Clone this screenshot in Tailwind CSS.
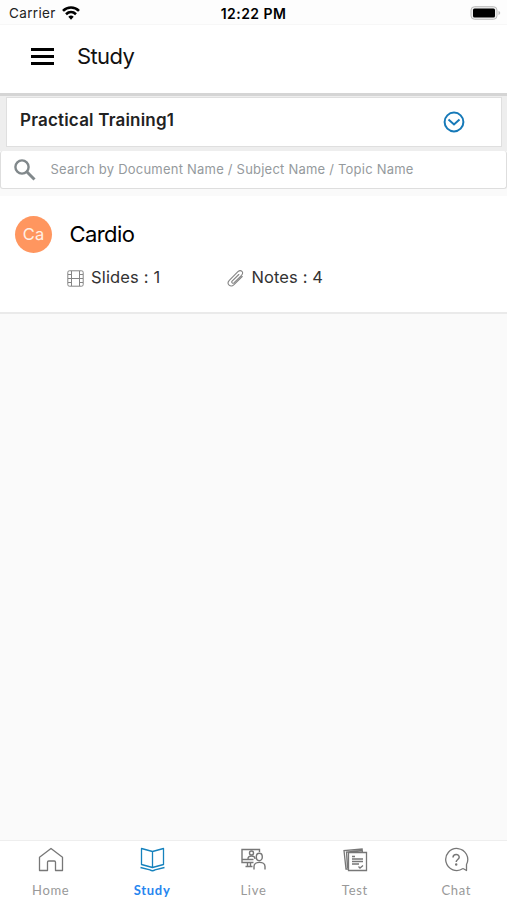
<!DOCTYPE html>
<html lang="en"><head><meta charset="utf-8"><title>Study</title>
<script src="https://cdn.jsdelivr.net/npm/@tailwindcss/browser@4"></script></head>
<body class="bg-[#fafafa]">
<div class="flex h-[900px] w-[507px] flex-col overflow-hidden font-['Inter','Liberation_Sans',sans-serif] text-black">
  <div class="grid h-[25px] shrink-0 grid-cols-3 items-center border-b border-[#f7f7f7] bg-[#fdfdfd] pt-[3px] text-[13.5px]">
    <div class="flex items-center gap-[6px] pl-[9px] text-[#222]"><span class="whitespace-nowrap text-[13.5px] tracking-[0.35px]">Carrier</span>
      <svg class="mb-[2px] h-[14px] w-[18px]" viewBox="0 0 18 14" fill="none" stroke="#000" stroke-width="2.6"><path d="M1 4.9C5.5.4 12.500.4 17 4.900M4 8.200C7 5.400 11 5.400 14 8.200"/><path d="M6.300 10.800Q9 8.400 11.700 10.800L9 13.700Z" fill="#000" stroke="none"/></svg>
    </div>
    <div class="text-center text-[14px] font-semibold tracking-[0.45px] whitespace-nowrap">12:22 PM</div>
    <div class="flex justify-end pr-[6px]"><svg class="mb-[2px] h-[14px] w-[31px]" viewBox="0 0 31 14"><rect x="1" y=".7" width="26" height="12.600" rx="3.500" fill="#eee" stroke="#bbb"/><rect x="3" y="2.500" width="22" height="9" rx="1.500"/><path d="M28.500 4.800Q32 7 28.500 9.200Z" fill="#bbb"/></svg></div>
  </div>
  <header class="flex h-[68px] shrink-0 items-center bg-white pb-[5px] pl-[31px]">
    <svg class="h-[19px] w-[23px]" viewBox="0 0 23 19"><path d="M0 1h23v3H0zM0 8h23v3H0zM0 15h23v3H0z"/></svg>
    <h1 class="ml-[23px] text-[22px] tracking-[-0.6px] text-[#111]">Study</h1>
  </header>
  <section class="h-[58px] shrink-0 border-t-[3px] border-[#d5d5d5] bg-[#eeeeee] pr-[5px] pl-[6px]">
    <div class="mt-px flex h-[50px] items-center justify-between border border-[#dfdfdf] bg-white pr-[36px] pl-[13px]">
      <span class="mb-[3px] text-[17px] font-semibold tracking-[0.2px] text-[#222]">Practical Training1</span>
      <svg class="h-[22px] w-[22px]" viewBox="0 0 22 22" fill="none" stroke="#1679b8" stroke-width="2"><circle cx="11" cy="11" r="9.400"/><path d="m5.500 8.500 5.500 5L16.500 8.500"/></svg>
    </div>
  </section>
  <div class="flex h-[38px] shrink-0 items-center rounded-[3px] border-x border-b border-[#dedede] bg-white pl-[13px]">
    <svg class="h-[22px] w-[22px]" viewBox="0 0 22 22" fill="none" stroke="#81888b"><circle cx="8" cy="8" r="6.600" stroke-width="2.400"/><path d="m12.800 12.800 7.700 7.700" stroke-width="3"/></svg>
    <span class="ml-[14.5px] text-[13px] tracking-[0.22px] whitespace-nowrap text-[#959a9d]">Search by Document Name / Subject Name / Topic Name</span>
  </div>
  <article class="mt-[7px] h-[118px] shrink-0 border-b-2 border-[#eaeaea] bg-white pt-[20px] pl-[15px]">
    <div class="flex items-center"><div class="flex h-[37px] w-[37px] items-center justify-center rounded-full bg-[#ff965f] text-[16.500px] text-[#fff0e5]">Ca</div><h2 class="ml-[17.5px] text-[22px] tracking-[-0.6px]">Cardio</h2></div>
    <div class="mt-[12px] ml-[52px] flex items-center text-[16.500px] text-[#333]">
      <div class="flex w-[160px] items-center gap-[7px]"><svg class="mt-[2px] h-[17px] w-[17px]" viewBox="0 0 17 17" fill="none" stroke="#858585"><rect x=".8" y=".8" width="15.400" height="15.400" rx="1.500"/><path d="M4.500 1v15M12.500 1v15M4.500 8.500h8M1 4.500h3.500M1 8.500h3.500M1 12.500h3.500M12.500 4.500H16M12.500 8.500H16M12.500 12.500H16"/></svg><span class="tracking-[0.15px] whitespace-nowrap">Slides : 1</span></div>
      <div class="flex items-center gap-[7.5px]"><svg class="mt-[2px] h-[17px] w-[17px]" viewBox="0 0 17 17" fill="none" stroke="#858585" stroke-width="1.100" stroke-linecap="round"><path d="m11.800 4.500-6.700 6.700c-1 1.200.6 2.700 1.800 1.600L14.500 5.300C17.500 2.200 14 -1 10.900 1.700L2.300 10.300c-3.300 3.600 1.200 7.700 4.700 4.400l8.200-8.200"/></svg><span class="tracking-[0.1px] whitespace-nowrap">Notes : 4</span></div>
    </div>
  </article>
  <main class="flex-1 bg-[#fafafa]"></main>
  <nav class="grid h-[60px] shrink-0 grid-cols-5 border-t border-[#eeeeee] bg-white font-['Lato','Open_Sans',sans-serif] text-[13px] leading-[16px] tracking-[0.7px] text-[#999]">
    <div class="flex flex-col items-center gap-[9px] pt-[6px]"><svg class="h-[26px] w-[26px]" viewBox="0 0 26 26" fill="none" stroke="#777" stroke-width="1.300" stroke-linejoin="round"><path d="M1.500 10.300 13 1.500l11.500 8.800v13.200h-7v-8.300q0-1.200-1.200-1.200H10.700q-1.200 0-1.200 1.200v8.300h-8z"/></svg><span>Home</span></div>
    <div class="flex flex-col items-center gap-[9px] pt-[6px] font-bold text-[#2686ef]"><svg class="h-[26px] w-[26px]" viewBox="0 0 26 26" fill="none" stroke="#1682bd" stroke-width="1.300" stroke-linejoin="round"><path d="M2.500 1.500 13.500 4.500l11-3v16l-11 3-11-3zM13.500 4.500v16M1.500 20.500l9.500 2.400q2.500 1.700 5 0L25.500 20.500"/></svg><span>Study</span></div>
    <div class="flex flex-col items-center gap-[9px] pt-[6px]"><svg class="h-[26px] w-[26px]" viewBox="0 0 26 26" fill="none" stroke="#777" stroke-width="1.400"><path d="M19.500 5V2.500H2v13h11.500M2 12.500h11.500M7.500 15.500v3.500M10.500 15.500v3.500M5.500 19.500h7"/><circle cx="11.500" cy="6" r="2"/><path d="M8 12c0-4 7-4 7 0"/><ellipse cx="19.300" cy="10" rx="3" ry="3.700"/><path d="M14 22.500v-3c0-5.500 11-5.500 11 0v3"/></svg><span>Live</span></div>
    <div class="flex flex-col items-center gap-[9px] pt-[6px]"><svg class="h-[26px] w-[26px]" viewBox="0 0 26 26" fill="none" stroke="#777" stroke-width="1.300"><path d="M6.500 5.500h18v18h-18zM20.500 5.500l-.4-3.500L2 3.500l2 18.500h2.500M20.500 3.500 4.500 5l1 16M10 9.500h3M10 12h11M10 14.500h11M10 17h7M16.500 19.500l1.500 1.500 3-2.500"/></svg><span>Test</span></div>
    <div class="flex flex-col items-center gap-[9px] pt-[6px]"><svg class="h-[26px] w-[26px]" viewBox="0 0 26 26" fill="none" stroke="#777" stroke-width="1.300" stroke-linejoin="round"><path d="M20 21.500A11 11 0 1 1 23.500 17.500V23.500L20 21.500"/><path d="M10 10.500c.2-4.200 6.400-3.700 6.200-.2-.1 2.200-3 2.200-3 4.600" stroke-width="1.500"/><circle cx="13.200" cy="17.500" r=".6" fill="#777"/></svg><span>Chat</span></div>
  </nav>
</div></body></html>
